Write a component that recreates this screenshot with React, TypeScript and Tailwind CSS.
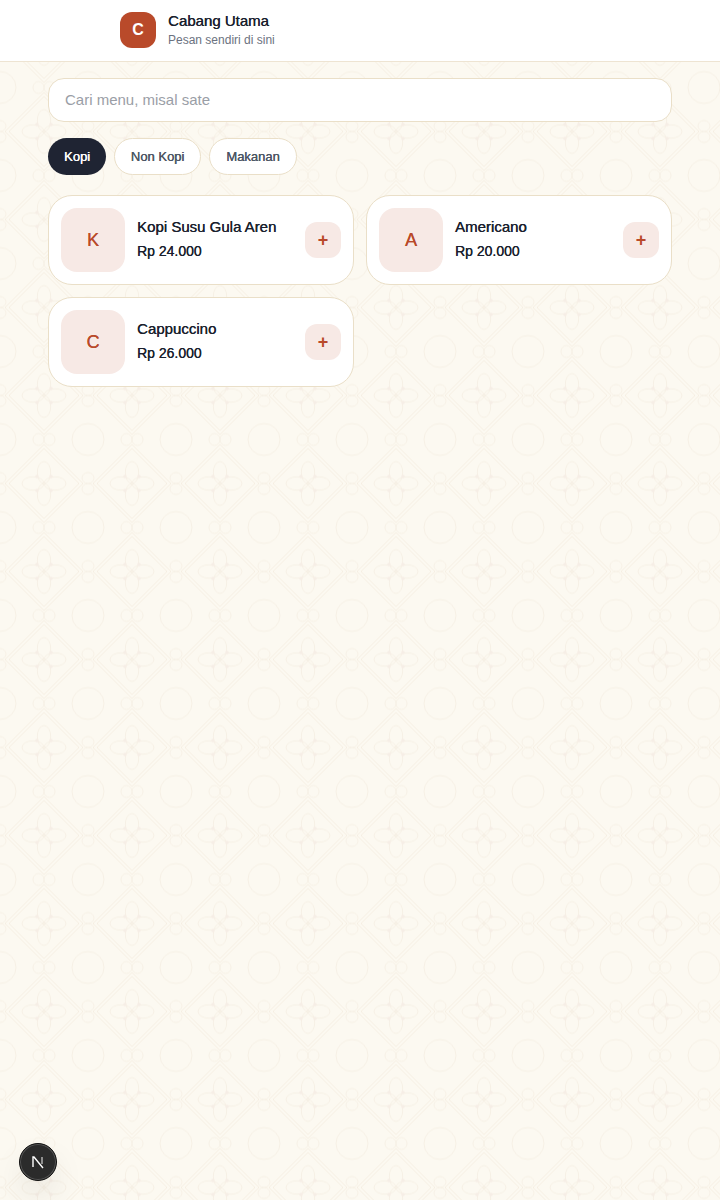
const products = [
	{ id: 1, name: 'Kopi Susu Gula Aren', price: 'Rp 24.000', initial: 'K' },
	{ id: 2, name: 'Americano', price: 'Rp 20.000', initial: 'A' },
	{ id: 3, name: 'Cappuccino', price: 'Rp 26.000', initial: 'C' },
]

const categories = [
	{ label: 'Kopi', className: 'w-[58px] bg-[#1f2433] text-white' },
	{ label: 'Non Kopi', className: 'w-[87px] border border-[#eadfc8] bg-white text-[#4b5563]' },
	{ label: 'Makanan', className: 'w-[88px] border border-[#eadfc8] bg-white text-[#4b5563]' },
]

// One tile: circle on the corners, flower inside a double diamond in the middle
const Motif = () => (
	<g fill="none" stroke="#f6f0e5" strokeWidth="1">
		<circle cx="0" cy="0" r="16" />
		<circle cx="88" cy="0" r="16" />
		<circle cx="0" cy="88" r="16" />
		<circle cx="88" cy="88" r="16" />
		<path d="M44 5 L83 44 L44 83 L5 44 Z" stroke="#f5eee2" />
		<path d="M44 9 L79 44 L44 79 L9 44 Z" stroke="#f5eee2" />
		<ellipse cx="44" cy="33" rx="6.7" ry="11" />
		<ellipse cx="44" cy="55" rx="6.7" ry="11" />
		<ellipse cx="33" cy="44" rx="11" ry="6.7" />
		<ellipse cx="55" cy="44" rx="11" ry="6.7" />
		<ellipse cx="38.5" cy="0" rx="5.5" ry="6" />
		<ellipse cx="49.5" cy="0" rx="5.5" ry="6" />
		<ellipse cx="38.5" cy="88" rx="5.5" ry="6" />
		<ellipse cx="49.5" cy="88" rx="5.5" ry="6" />
		<ellipse cx="0" cy="38.5" rx="6" ry="5.5" />
		<ellipse cx="0" cy="49.5" rx="6" ry="5.5" />
		<ellipse cx="88" cy="38.5" rx="6" ry="5.5" />
		<ellipse cx="88" cy="49.5" rx="6" ry="5.5" />
		<g fill="#f6eee6" stroke="none">
			<circle cx="37" cy="37" r="1.8" />
			<circle cx="51" cy="37" r="1.8" />
			<circle cx="37" cy="51" r="1.8" />
			<circle cx="51" cy="51" r="1.8" />
		</g>
	</g>
)

export default function App() {
	return (
		<div className="relative min-h-[1200px] bg-[#fcf9f1] font-['Liberation_Sans',Arial,sans-serif] text-[#1a1f2e]">
			{/* Background pattern */}
			<svg className="absolute inset-0 h-full w-full" aria-hidden="true">
				<defs>
					<pattern id="batik" width="88" height="88" patternUnits="userSpaceOnUse" y="-0.5">
						<Motif />
					</pattern>
				</defs>
				<rect width="100%" height="100%" fill="url(#batik)" />
			</svg>

			<div className="relative">
				{/* Header */}
				<header className="h-[62px] border-b border-[#eee4d2] bg-white">
					<div className="mx-auto flex w-[480px] items-center gap-3 pt-3">
						<div className="flex h-9 w-9 items-center justify-center rounded-xl bg-[#b94a2a] text-base font-bold text-white">
							C
						</div>
						<div>
							<div className="text-[15px] leading-[18px] [text-shadow:0.3px_0_0_currentColor]">Cabang Utama</div>
							<div className="mt-[2px] text-xs leading-4 text-[#6b7280]">Pesan sendiri di sini</div>
						</div>
					</div>
				</header>

				<main className="px-12 pt-4">
					{/* Search */}
					<input
						placeholder="Cari menu, misal sate"
						className="h-11 w-full rounded-2xl border border-[#eadfc8] bg-white px-4 pb-0.5 text-[15px] outline-none placeholder:text-[#9a9ea6]"
					/>

					{/* Categories */}
					<div className="mt-4 flex gap-2">
						{categories.map(category => (
							<button
								key={category.label}
								className={`h-[37px] rounded-full text-[13px] [text-shadow:0.3px_0_0_currentColor] ${category.className}`}
							>
								{category.label}
							</button>
						))}
					</div>

					{/* Product grid */}
					<div className="mt-5 grid grid-cols-2 gap-3">
						{products.map(product => (
							<div key={product.id} className="flex items-center gap-3 rounded-3xl border border-[#eadfc8] bg-white p-3">
								<div className="flex h-16 w-16 shrink-0 items-center justify-center rounded-2xl bg-[#f7e9e5] text-lg text-[#b94a2a] [text-shadow:0.3px_0_0_currentColor]">
									{product.initial}
								</div>
								<div className="min-w-0 grow pb-0.5">
									<div className="text-[15px] leading-5 [text-shadow:0.3px_0_0_currentColor]">{product.name}</div>
									<div className="mt-1 text-sm leading-5 [text-shadow:0.25px_0_0_currentColor]">{product.price}</div>
								</div>
								<button className="flex h-9 w-9 shrink-0 items-center justify-center rounded-xl bg-[#f7e9e5] text-lg font-bold text-[#b94a2a]">
									+
								</button>
							</div>
						))}
					</div>
				</main>
			</div>

			{/* Dev indicator */}
			<div className="absolute top-[1143px] left-[19px] flex h-[38px] w-[38px] items-center justify-center rounded-full border border-[#111111] bg-[#2b2b2b] shadow-[inset_0_0_0_1px_#555555,0_16px_32px_rgba(0,0,0,0.08)]">
				<svg width="16" height="16" viewBox="0 0 16 16" fill="none">
					<path d="M3 13 V3 H4 L13 14" stroke="white" strokeWidth="1.4" />
					<path d="M12 3 V10" stroke="#bbbbbb" strokeWidth="1.4" />
				</svg>
			</div>
		</div>
	)
}
